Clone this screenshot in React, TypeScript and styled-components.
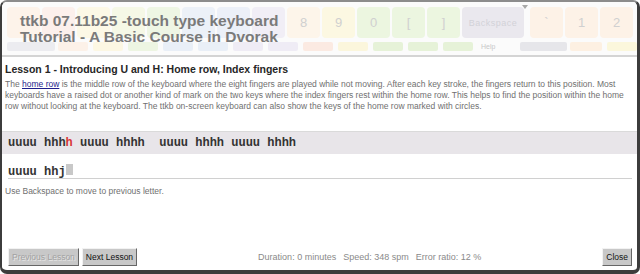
import * as React from "react"
import styled, { createGlobalStyle } from "styled-components"

const GlobalStyle = createGlobalStyle`
  html, body {
    margin: 0;
    padding: 0;
    background: #ffffff;
  }
  body {
    width: 640px;
    height: 274px;
    overflow: hidden;
    font-family: "Liberation Sans", Arial, sans-serif;
  }
`

const Window = styled.div`
  box-sizing: border-box;
  width: 640px;
  height: 274px;
  display: flex;
  flex-direction: column;
  background: #ffffff;
  border: 3px solid #3c3c3c;
  border-left-width: 2px;
  border-top: 2px solid #8c8c8c;
  border-bottom-width: 4px;
  border-radius: 7px;
  overflow: hidden;
`

// ---- header with faded keyboard ----

const Header = styled.div`
  position: relative;
  box-sizing: border-box;
  flex: none;
  height: 55px;
  padding: 5px 0 0 5px;
  background: #fbfbfb;
  border-bottom: 2px solid #d4d4d4;
  overflow: hidden;
  display: flex;
  flex-direction: column;
  gap: 4px;
`

const KeyRow = styled.div`
  display: flex;
  gap: 2px;
`

const Key = styled.div<{ $w: number; $bg: string; $ml?: number }>`
  flex: none;
  width: ${p => p.$w}px;
  height: 31px;
  margin-left: ${p => p.$ml ?? 0}px;
  border-radius: 4px;
  background: ${p => p.$bg};
  color: #d0d0d0;
  font-size: 13px;
  display: flex;
  align-items: center;
  justify-content: center;
`

const KeyCaption = styled.span`
  font-size: 9px;
  color: #d2d2d8;
  letter-spacing: 0.5px;
`

const StripRow = styled.div`
  display: flex;
  align-items: center;
  gap: 5px;
`

const Strip = styled.div<{ $w: number; $bg: string; $ml?: number }>`
  flex: none;
  width: ${p => p.$w}px;
  height: 9px;
  margin-left: ${p => p.$ml ?? 0}px;
  border-radius: 2px;
  background: ${p => p.$bg};
`

const StripLabel = styled.span`
  width: 49px;
  font-size: 7px;
  color: #c8c8c8;
  padding-left: 3px;
`

const Marker = styled.div`
  position: absolute;
  left: 520px;
  top: 3px;
  width: 0;
  height: 0;
  border-left: 3px solid transparent;
  border-right: 3px solid transparent;
  border-top: 4px solid #a8a8a8;
`

const Title = styled.h1`
  position: absolute;
  left: 18px;
  top: 11px;
  margin: 0;
  font-family: "Liberation Sans", Arial, sans-serif;
  font-size: 15.5px;
  line-height: 15.5px;
  font-weight: bold;
  color: #7a7a7a;
  white-space: nowrap;
`

const TitleLine = styled.span`
  display: block;
`

// ---- lesson body ----

const Content = styled.div`
  flex: 1;
  display: flex;
  flex-direction: column;
`

const Heading = styled.h2`
  margin: 6px 0 0;
  padding: 0 3px;
  font-family: "Liberation Sans", Arial, sans-serif;
  font-size: 10.5px;
  line-height: 13px;
  font-weight: bold;
  color: #262626;
  white-space: nowrap;
`

const Text = styled.p<{ $mt: number }>`
  margin: ${p => p.$mt}px 0 0;
  padding: 0 3px;
  font-size: 8.5px;
  line-height: 11px;
  color: #707070;
  white-space: nowrap;
`

const Link = styled.a`
  color: #1e1e8c;
  text-decoration: underline;
`

const Target = styled.div`
  margin-top: 19px;
  height: 22px;
  padding-left: 6px;
  border-top: 1px solid #dadada;
  background: #e8e5e9;
  font-family: "Liberation Mono", "Courier New", monospace;
  font-weight: bold;
  font-size: 12px;
  line-height: 22px;
  color: #333333;
  white-space: pre;
`

const Current = styled.span`
  color: #d83838;
`

const Typed = styled.div`
  margin: 10px 5px 0 6px;
  height: 14px;
  border-bottom: 1px solid #d0d0d0;
  font-family: "Liberation Mono", "Courier New", monospace;
  font-weight: bold;
  font-size: 12px;
  line-height: 14px;
  color: #333333;
  white-space: pre;
`

const Cursor = styled.span`
  display: inline-block;
  width: 7px;
  height: 11px;
  background: #c8c8c8;
`

// ---- footer ----

const Footer = styled.div`
  margin-top: auto;
  padding: 0 5px 4px 6px;
  display: flex;
  align-items: center;
`

const ButtonGroup = styled.div`
  display: flex;
  gap: 3px;
`

const Button = styled.button`
  box-sizing: border-box;
  height: 18px;
  padding: 0 3px;
  font-family: "Liberation Sans", Arial, sans-serif;
  font-size: 8.5px;
  color: #111111;
  background: #c8c8c8;
  border: 1px solid;
  border-color: #f2f2f2 #666666 #666666 #f2f2f2;
  border-radius: 0;

  &:disabled {
    color: #a2a2a2;
    text-shadow: 1px 1px 0 #e6e6e6;
  }
`

const Status = styled.div`
  flex: 1;
  display: flex;
  justify-content: center;
  gap: 7px;
  font-size: 9px;
  color: #8a8a8a;
  white-space: nowrap;
`

// keys under the title carry no visible caption in the reference
const topKeys: { label: string; bg: string }[] = [
  { label: "", bg: "#fdf3ea" },
  { label: "", bg: "#fcf0ec" },
  { label: "", bg: "#fcf8e6" },
  { label: "", bg: "#f5f8e6" },
  { label: "", bg: "#eef6e4" },
  { label: "", bg: "#ecf1f8" },
  { label: "", bg: "#ecf0f8" },
  { label: "", bg: "#f1eef6" },
  { label: "8", bg: "#fdf5ea" },
  { label: "9", bg: "#fcf8e2" },
  { label: "0", bg: "#ecf6e0" },
  { label: "[", bg: "#ecf6e0" },
  { label: "]", bg: "#ecf6e0" },
]

const rightKeys = [
  { label: "`", bg: "#fdf2e7" },
  { label: "1", bg: "#fdf2e7" },
  { label: "2", bg: "#fdf2e7" },
]

const strips = [
  "#fcf1e8",
  "#fcf7e3",
  "#edf5e2",
  "#e9eff7",
  "#e9eff7",
  "#efecf5",
  "#efecf5",
  "#fbeae2",
  "#fbf6dc",
  "#e6f2d8",
  "#e6f2d8",
  "#e6f2d8",
]

export default function App() {
  return (
    <>
      <GlobalStyle />
      <Window>
        <Header>
          <KeyRow>
            {topKeys.map((k, i) => (
              <Key key={i} $w={33} $bg={k.bg}>
                {k.label}
              </Key>
            ))}
            <Key $w={62} $bg="#eae8ee">
              <KeyCaption>Backspace</KeyCaption>
            </Key>
            {rightKeys.map((k, i) => (
              <Key key={"r" + i} $w={33} $bg={k.bg} $ml={i === 0 ? 4 : 0}>
                {k.label}
              </Key>
            ))}
          </KeyRow>
          <StripRow>
            <Strip $w={48} $bg="#ececf0" />
            {strips.map((c, i) => (
              <Strip key={i} $w={30} $bg={c} $ml={i === 0 ? -2 : 0} />
            ))}
            <StripLabel>Help</StripLabel>
            <Strip $w={47} $bg="#e6e6ea" />
            <Strip $w={32} $bg="#fdf0e2" $ml={-2} />
            <Strip $w={30} $bg="#fbf7dc" />
          </StripRow>
          <Marker />
          <Title>
            <TitleLine>ttkb 07.11b25 -touch type keyboard</TitleLine>
            <TitleLine>Tutorial - A Basic Course in Dvorak</TitleLine>
          </Title>
        </Header>

        <Content>
          <Heading>Lesson 1 - Introducing U and H: Home row, Index fingers</Heading>
          <Text $mt={3}>
            The <Link href="#">home row</Link> is the middle row of the keyboard where the eight fingers
            are played while not moving. After each key stroke, the fingers return to this position. Most
            <br />
            keyboards have a raised dot or another kind of mark on the two keys where the index fingers
            rest within the home row. This helps to find the position within the home
            <br />
            row without looking at the keyboard. The ttkb on-screen keyboard can also show the keys of the
            home row marked with circles.
          </Text>

          <Target>
            {"uuuu hhh"}
            <Current>h</Current>
            {" uuuu hhhh  uuuu hhhh uuuu hhhh"}
          </Target>
          <Typed>
            {"uuuu hhj"}
            <Cursor />
          </Typed>

          <Text $mt={7}>Use Backspace to move to previous letter.</Text>

          <Footer>
            <ButtonGroup>
              <Button disabled>Previous Lesson</Button>
              <Button>Next Lesson</Button>
            </ButtonGroup>
            <Status>
              <span>Duration: 0 minutes</span>
              <span>Speed: 348 spm</span>
              <span>Error ratio: 12 %</span>
            </Status>
            <Button>Close</Button>
          </Footer>
        </Content>
      </Window>
    </>
  )
}
